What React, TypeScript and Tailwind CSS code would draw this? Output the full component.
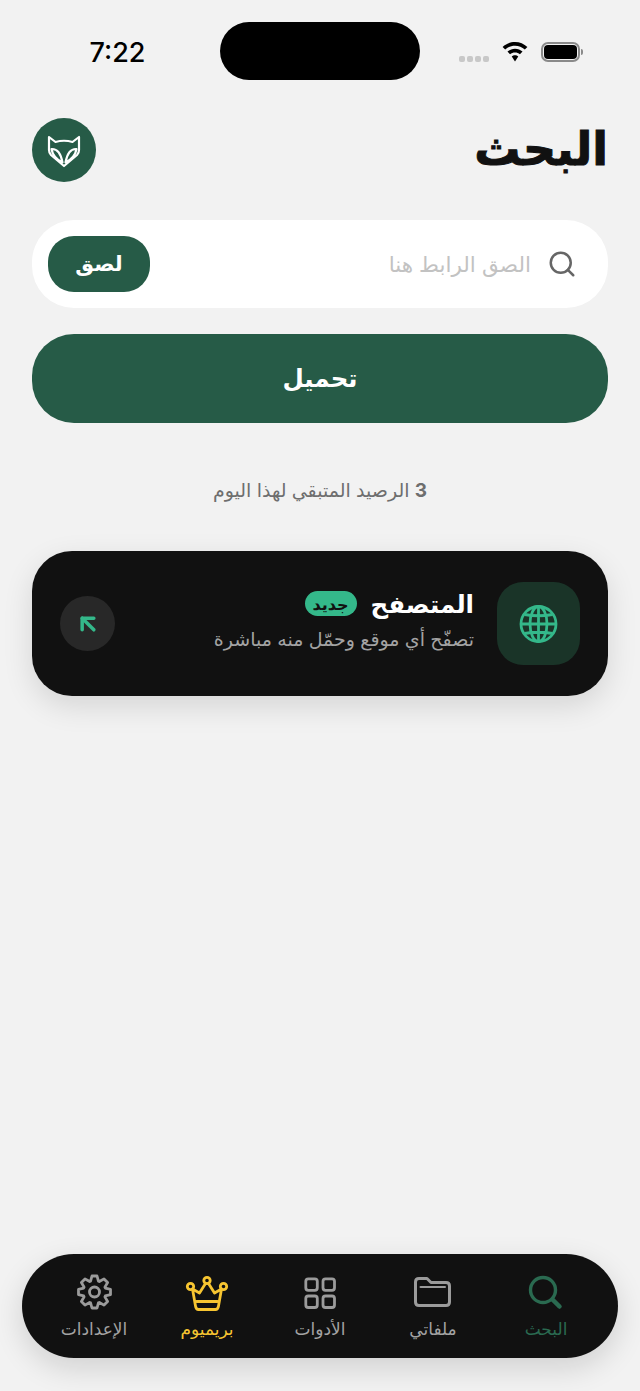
import React from 'react';
import { ArrowUpLeft, Search } from 'lucide-react';

const FoxLogo = () => (
  <svg width="48" height="48" viewBox="0 1 48 48" fill="none" stroke="#fff" strokeWidth="2.2" strokeLinejoin="round" strokeLinecap="round">
    <path d="M9 12 L15.500 17 Q24 14.500 32.500 17 L39 12 V25 Q39 28 37 30 L24 41 L11 30 Q9 28 9 25 Z" />
    <path d="M11.500 24 Q20 23.500 22.500 37.500 Q13 33 11.500 24 Z" />
    <path d="M36.500 24 Q28 23.500 25.500 37.500 Q35 33 36.500 24 Z" />
  </svg>
);

const Globe = () => (
  <svg width="48" height="48" viewBox="0 0 48 48" fill="none" stroke="#34b88a" strokeWidth="2.8">
    <circle cx="23.500" cy="24" r="17.500" />
    <ellipse cx="23.500" cy="24" rx="8.500" ry="17.500" />
    <path d="M23.500 6.500 V41.500 M6 24 H41 M9.500 14.500 Q23.500 17 37.500 14.500 M9.500 33.500 Q23.500 31 37.500 33.500" />
  </svg>
);

const SearchTab = () => (
  <svg width="48" height="48" viewBox="0 0 48 48" fill="none" stroke="#2a6a50" strokeLinecap="round">
    <circle cx="21" cy="22" r="12.500" strokeWidth="3.400" />
    <path d="M30.500 31.500 L37.500 38.500" strokeWidth="4.500" />
  </svg>
);

const FolderIcon = () => (
  <svg width="48" height="48" viewBox="0 0 48 48" fill="none" stroke="#9b9b9b" strokeWidth="3" strokeLinejoin="round" strokeLinecap="round">
    <path d="M6.500 14 Q6.500 10.500 10 10.500 H18 L22 14.500 H37 Q40.500 14.500 40.500 18 V34 Q40.500 37.500 37 37.500 H10 Q6.500 37.500 6.500 34 Z" />
    <path d="M11.500 19 H36" strokeWidth="2" />
  </svg>
);

const GridIcon = () => (
  <svg width="48" height="48" viewBox="0 0 48 48" fill="none" stroke="#9b9b9b" strokeWidth="2.8">
    <rect x="9.800" y="10.800" width="11.500" height="11.500" rx="2.500" />
    <rect x="27" y="10.800" width="11.500" height="11.500" rx="2.500" />
    <rect x="9.800" y="28" width="11.500" height="11.500" rx="2.500" />
    <rect x="27" y="28" width="11.500" height="11.500" rx="2.500" />
  </svg>
);

const Crown = () => (
  <svg width="54" height="48" viewBox="0 0 54 48" fill="none" stroke="#f7c531" strokeWidth="2.8" strokeLinejoin="round" strokeLinecap="round">
    <circle cx="27" cy="12.500" r="3.200" />
    <circle cx="10.500" cy="18.500" r="3.200" />
    <circle cx="43.500" cy="18.500" r="3.200" />
    <path d="M25.500 15.500 L19.500 25 L12.500 21 L15.500 38 Q16 41.500 18.500 41.500 H35.500 Q38 41.500 38.500 38 L41.500 21 L34.500 25 L28.500 15.500" />
    <path d="M16.500 33.500 H37.500" />
  </svg>
);

// 8 toothed gear, rounded off by the stroke join
const gearPath = () => {
  const pts: string[] = [];
  for (let i = 0; i < 8; i++) {
    const a = (i * 45 * Math.PI) / 180;
    const step = (d: number, r: number) => {
      const t = a + (d * Math.PI) / 180;
      return `${(24.5 + r * Math.sin(t)).toFixed(2)} ${(24 - r * Math.cos(t)).toFixed(2)}`;
    };
    pts.push(step(-20, 11.5), step(-9, 16.2), step(9, 16.2), step(20, 11.5));
  }
  return `M${pts.join(' L')} Z`;
};

const GearIcon = () => (
  <svg width="48" height="48" viewBox="0 0 48 48" fill="none" stroke="#9b9b9b" strokeWidth="2.8" strokeLinejoin="round">
    <path d={gearPath()} />
    <circle cx="24.500" cy="24" r="5" />
  </svg>
);

const Wifi = () => (
  <svg width="26" height="20" viewBox="0 0 26 21" fill="#000">
    <path d="M13 0 C18 0 22.500 2 26 5.200 L23.300 8 C20.500 5.400 16.900 3.900 13 3.900 C9.100 3.900 5.500 5.400 2.700 8 L0 5.200 C3.500 2 8 0 13 0 Z" />
    <path d="M13 7 C16 7 18.800 8.200 20.900 10.100 L18.200 12.900 C16.800 11.600 15 10.900 13 10.900 C11 10.900 9.200 11.600 7.800 12.900 L5.100 10.100 C7.200 8.200 10 7 13 7 Z" />
    <path d="M13 14 C14.300 14 15.500 14.500 16.400 15.300 L13 20.500 L9.600 15.300 C10.500 14.500 11.700 14 13 14 Z" />
  </svg>
);

const tabs = [
  { label: 'البحث', color: 'text-[#2a6a50]', icon: <SearchTab /> },
  { label: 'ملفاتي', color: 'text-[#a3a3a3]', icon: <FolderIcon /> },
  { label: 'الأدوات', color: 'text-[#a3a3a3]', icon: <GridIcon /> },
  { label: 'بريميوم', color: 'text-[#f7c531]', icon: <Crown /> },
  { label: 'الإعدادات', color: 'text-[#a3a3a3]', icon: <GearIcon /> },
];

export default function App() {
  return (
    <div dir="rtl" className="w-[640px] h-[1391px] bg-[#f2f2f2] flex flex-col font-['Inter','DejaVu_Sans',sans-serif]">
      {/* status bar */}
      <div dir="ltr" className="h-[58px] mt-[22px] flex items-center">
        <div className="w-[220px] pl-[15px] pt-[2px] text-center text-[27px] font-medium text-black leading-none">7:22</div>
        <div className="w-[200px] h-[58px] rounded-[29px] bg-black" />
        <div className="flex items-center pl-[39px] pt-[2px]">
          <div className="flex gap-[2px] mt-[14px]">
            <span className="w-[6px] h-[6px] rounded-[2px] bg-[#c8c8c8]" />
            <span className="w-[6px] h-[6px] rounded-[2px] bg-[#c8c8c8]" />
            <span className="w-[6px] h-[6px] rounded-[2px] bg-[#c8c8c8]" />
            <span className="w-[6px] h-[6px] rounded-[2px] bg-[#c8c8c8]" />
          </div>
          <div className="ml-[13px]"><Wifi /></div>
          <div className="ml-[13px] flex items-center">
            <div className="w-[39px] h-[20px] rounded-[7px] border-2 border-[#8a8a8a] p-[1px]">
              <div className="w-full h-full rounded-[4px] bg-black" />
            </div>
            <div className="w-[2px] h-[6px] rounded-r-[2px] bg-[#8a8a8a] ml-[1px]" />
          </div>
        </div>
      </div>

      {/* header */}
      <div className="mt-[38px] px-8 flex items-center justify-between h-[64px]">
        <h1 className="text-[46px] font-bold leading-none text-[#111] pb-[4px] [-webkit-text-stroke:1px_#111]">البحث</h1>
        <div className="w-[64px] h-[64px] rounded-full bg-[#265b47] flex items-center justify-center">
          <FoxLogo />
        </div>
      </div>

      {/* search */}
      <div className="mt-[38px] mx-8 h-[88px] rounded-[42px] bg-white flex items-center pr-[31px] pl-4">
        <Search size={30} strokeWidth={2} className="text-[#666] shrink-0" />
        <span className="mr-[16px] text-[21.5px] text-[#c2c2c2] flex-1">الصق الرابط هنا</span>
        <button className="w-[102px] h-[56px] rounded-[26px] bg-[#265b47] text-white text-[21px] font-bold">لصق</button>
      </div>

      <button className="mt-[26px] mx-8 h-[89px] rounded-[42px] bg-[#265b47] text-white text-[24.5px] font-bold shrink-0">تحميل</button>

      <p className="mt-[54px] text-center text-[19px] leading-[28px] text-[#6e6e6e]"><span className="font-bold">3</span> الرصيد المتبقي لهذا اليوم</p>

      {/* browser card */}
      <div className="mt-[46px] mx-8 h-[145px] rounded-[40px] bg-[#111111] flex items-center pr-[28px] pl-[28px] shadow-[0_10px_30px_rgba(0,0,0,0.12)] shrink-0">
        <div className="w-[83px] h-[83px] rounded-[26px] bg-[#1a3428] flex items-center justify-center shrink-0">
          <Globe />
        </div>
        <div className="mr-[23px] flex-1 flex flex-col gap-[5px] pb-[7px]">
          <div className="flex items-center gap-[14px]">
            <span className="text-[24.5px] font-bold text-white leading-[34px]">المتصفح</span>
            <span className="h-[25px] px-[8px] rounded-[13px] bg-[#34b88a] text-[#111] text-[16px] font-bold flex items-center">جديد</span>
          </div>
          <span className="text-[19px] leading-[28px] text-[#a3a3a3]">تصفّح أي موقع وحمّل منه مباشرة</span>
        </div>
        <div className="w-[55px] h-[55px] rounded-full bg-[#282828] flex items-center justify-center shrink-0">
          <ArrowUpLeft size={28} strokeWidth={3} className="text-[#34b88a]" />
        </div>
      </div>

      {/* tab bar */}
      <div className="mt-auto mb-[33px] mx-[22px] h-[104px] rounded-[52px] bg-[#111111] flex items-start justify-center pt-[14px] shadow-[0_10px_30px_rgba(0,0,0,0.14)]">
        {tabs.map((t) => (
          <div key={t.label} className="w-[113px] flex flex-col items-center gap-[2px]">
            <div className="h-[48px] flex items-center justify-center">{t.icon}</div>
            <span className={`text-[17px] leading-[22px] ${t.color}`}>{t.label}</span>
          </div>
        ))}
      </div>
    </div>
  );
}
